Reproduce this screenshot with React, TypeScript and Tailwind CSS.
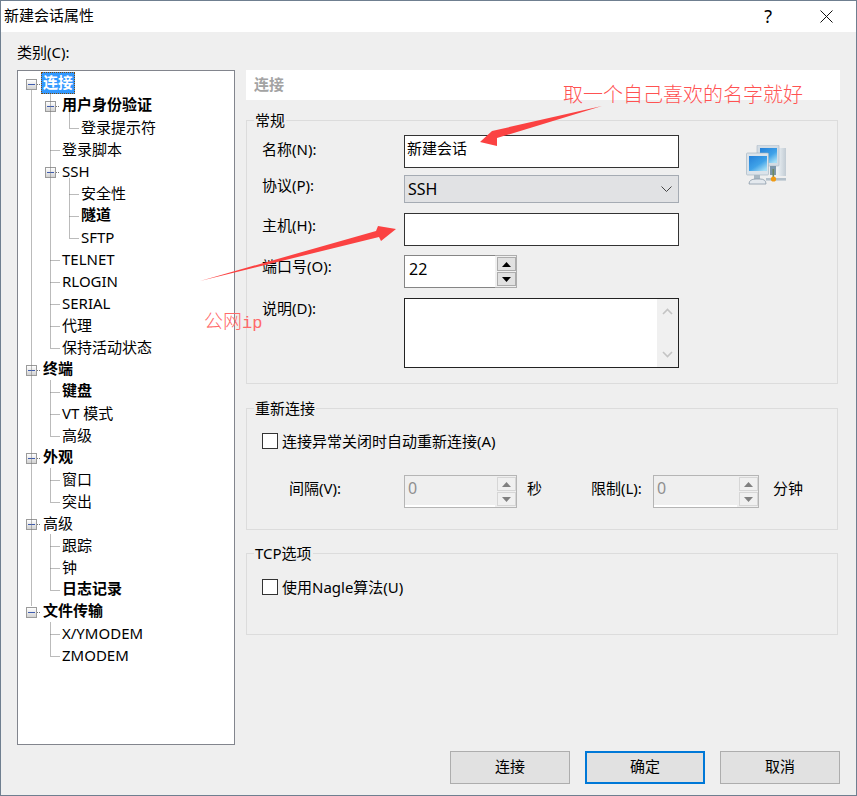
import React from "react";

const font = { fontFamily: '"Noto Sans", "Noto Sans CJK SC", sans-serif' };

type Row = { t: string; lv: 0 | 1 | 2; b?: boolean; box?: boolean; sel?: boolean };
const rows: Row[] = [
  { t: "连接", lv: 0, b: true, box: true, sel: true },
  { t: "用户身份验证", lv: 1, b: true, box: true },
  { t: "登录提示符", lv: 2 },
  { t: "登录脚本", lv: 1 },
  { t: "SSH", lv: 1, box: true },
  { t: "安全性", lv: 2 },
  { t: "隧道", lv: 2, b: true },
  { t: "SFTP", lv: 2 },
  { t: "TELNET", lv: 1 },
  { t: "RLOGIN", lv: 1 },
  { t: "SERIAL", lv: 1 },
  { t: "代理", lv: 1 },
  { t: "保持活动状态", lv: 1 },
  { t: "终端", lv: 0, b: true, box: true },
  { t: "键盘", lv: 1, b: true },
  { t: "VT 模式", lv: 1 },
  { t: "高级", lv: 1 },
  { t: "外观", lv: 0, b: true, box: true },
  { t: "窗口", lv: 1 },
  { t: "突出", lv: 1 },
  { t: "高级", lv: 0, box: true },
  { t: "跟踪", lv: 1 },
  { t: "钟", lv: 1 },
  { t: "日志记录", lv: 1, b: true },
  { t: "文件传输", lv: 0, b: true, box: true },
  { t: "X/YMODEM", lv: 1 },
  { t: "ZMODEM", lv: 1 },
];

const ROW_TOP = 1;
const yOf = (i: number) => ROW_TOP + i * 22 + 12.5;

function TreeLines() {
  const seg: [number, number, number, number][] = [];
  const X0 = 13.5;
  const X1 = 32.5;
  const X2 = 51.5;
  seg.push([X0, yOf(0) + 6, X0, yOf(24) - 6]);
  ([[0, 12], [13, 16], [17, 19], [20, 23], [24, 26]] as const).forEach(([a, b]) =>
    seg.push([X1, yOf(a) + 10, X1, yOf(b)])
  );
  ([[1, 2], [4, 7]] as const).forEach(([a, b]) => seg.push([X2, yOf(a) + 6, X2, yOf(b)]));
  rows.forEach((r, i) => {
    const y = yOf(i);
    if (r.lv === 0) seg.push([19, y, 23, y]);
    else if (r.lv === 1) seg.push(r.box ? [38, y, 42, y] : [X1, y, 42, y]);
    else seg.push([X2, y, 61, y]);
  });
  return (
    <svg className="absolute left-0 top-0 pointer-events-none" width="216" height="673">
      {seg.map((s, i) => (
        <line key={i} x1={s[0]} y1={s[1]} x2={s[2]} y2={s[3]} stroke="#777" strokeDasharray="1 1" />
      ))}
    </svg>
  );
}

function Box() {
  return (
    <span className="mt-[2px] mr-[6px] flex h-[11px] w-[11px] shrink-0 items-center justify-center border border-[#9b9b9b] bg-linear-to-b from-white to-[#d2d2d2]">
      <span className="h-px w-[7px] bg-[#3f5cae]" />
    </span>
  );
}

function TreeRow({ r }: { r: Row }) {
  const pad = r.lv === 0 ? "pl-[8px]" : r.lv === 2 ? "pl-[63px]" : r.box ? "pl-[27px]" : "pl-[44px]";
  return (
    <div className={`flex h-[22px] items-center ${pad}`}>
      {r.box && <Box />}
      <span
        className={`whitespace-nowrap text-[15px] ${r.b ? "font-bold" : "font-normal"} ${
          r.sel
            ? "-ml-[2px] h-[22px] border border-dotted border-[#7a4a10] bg-[#3399ff] px-[1px] leading-[18px] text-white"
            : r.b
              ? "pb-[2px] leading-[22px] text-black"
              : "leading-[22px] text-black"
        }`}
      >
        {r.t}
      </span>
    </div>
  );
}

function Tri({ up, color }: { up?: boolean; color: string }) {
  return (
    <svg width="9" height="5" viewBox="0 0 9 5">
      <polygon points={up ? "4.5,0 9,5 0,5" : "0,0 9,0 4.5,5"} fill={color} />
    </svg>
  );
}

function Spin({ value, disabled, w }: { value: string; disabled?: boolean; w: string }) {
  return (
    <div
      className={`flex h-[33px] ${w} shrink-0 border ${
        disabled ? "border-[#b5b5b5] bg-[#efefef]" : "border-[#adadad] bg-[#f0f0f0]"
      }`}
    >
      <div
        className={`flex flex-1 items-center pb-[6px] text-[16px] ${
          disabled
            ? "border-b-2 border-white pl-[3px] text-[#8f8f8f]"
            : "-my-px -ml-px border border-r-0 border-[#858585] bg-white pl-[4px] text-black"
        }`}
      >
        {value}
      </div>
      <div className="flex w-[21px] shrink-0 flex-col items-center justify-center gap-px pl-px">
        {[true, false].map((up) => (
          <div
            key={String(up)}
            className={`flex h-[14px] w-[19px] items-center justify-center border ${
              disabled ? "border-[#d6d6d6] bg-[#f0f0f0]" : "border-[#acacac] bg-[#e1e1e1]"
            }`}
          >
            <Tri up={up} color={disabled ? "#808080" : "#000"} />
          </div>
        ))}
      </div>
    </div>
  );
}

function Group({ title, h, className, children }: { title: string; h: string; className?: string; children?: React.ReactNode }) {
  return (
    <div className={`relative w-[592px] border border-[#dcdcdc] ${h} ${className ?? ""}`}>
      <span className="absolute -top-[11px] left-[7px] bg-[#efefef] px-px text-[15px] leading-[20px] text-black">{title}</span>
      {children}
    </div>
  );
}

function Check({ label, className }: { label: string; className?: string }) {
  return (
    <div className={`flex items-center ${className ?? ""}`}>
      <span className="h-[16px] w-[16px] shrink-0 border border-[#333] bg-white" />
      <span className="ml-[4px] text-[15px] leading-[20px] text-black">{label}</span>
    </div>
  );
}

function NetworkIcon() {
  return (
    <svg width="42" height="42" viewBox="0 0 42 42" className="shrink-0 blur-[0.4px]">
      <defs>
        <linearGradient id="scr" x1="0" y1="0" x2="0.8" y2="1">
          <stop offset="0" stopColor="#2580d8" />
          <stop offset="0.6" stopColor="#3fa2e8" />
          <stop offset="1" stopColor="#a6def5" />
        </linearGradient>
        <linearGradient id="tower" x1="0" y1="0" x2="1" y2="0">
          <stop offset="0" stopColor="#eef3f7" />
          <stop offset="1" stopColor="#c2ccd4" />
        </linearGradient>
      </defs>
      <rect x="31" y="3" width="9" height="28" fill="url(#tower)" />
      <rect x="11" y="0" width="22" height="21" rx="1" fill="#d3dce4" stroke="#a8b6c2" strokeWidth="0.6" />
      <rect x="14" y="3" width="17" height="15" fill="url(#scr)" />
      <rect x="24" y="21" width="6" height="9" fill="#7c97ab" />
      <rect x="0.5" y="8" width="22" height="22" rx="1" fill="#dbe3ea" stroke="#9fb0bd" strokeWidth="0.6" />
      <rect x="3" y="11" width="18" height="15" fill="url(#scr)" />
      <rect x="8" y="30" width="6" height="5" fill="#a9b8c3" />
      <path d="M3 39 Q3 34 10 34 L14 34 Q20 34 20 39 Z" fill="#e4e9ee" stroke="#8a9aa8" strokeWidth="0.8" />
      <rect x="20" y="33" width="20" height="2.6" fill="#b4c0ca" />
      <rect x="26.5" y="24" width="1.6" height="9" fill="#6f8a5c" />
      <circle cx="27.5" cy="34" r="2.6" fill="#f09a12" />
    </svg>
  );
}

function Btn({ label, primary, className }: { label: string; primary?: boolean; className?: string }) {
  return (
    <button
      className={`flex h-[33px] w-[120px] items-center justify-center bg-[#e1e1e1] pb-[2px] text-[15px] text-black ${
        primary ? "border-2 border-[#0078d7]" : "border border-[#adadad]"
      } ${className ?? ""}`}
    >
      {label}
    </button>
  );
}

export default function App() {
  return (
    <div style={font} className="relative h-[796px] w-[857px] overflow-hidden border border-[#6f7f90] bg-[#efefef] text-black">
      {/* title bar */}
      <div className="flex h-[31px] items-center justify-between bg-white pl-[3px]">
        <span className="pb-[2px] text-[15px]">新建会话属性</span>
        <div className="flex items-center">
          <span className="mr-[48px] pb-[2px] text-[18px] leading-none">?</span>
          <svg width="13" height="13" viewBox="0 0 13 13" className="mr-[23px]">
            <path d="M0.5 0.5 L12.5 12.5 M12.5 0.5 L0.5 12.5" stroke="#111" strokeWidth="1" />
          </svg>
        </div>
      </div>

      {/* body */}
      <div className="flex pl-[16px]">
        <div className="w-[218px] shrink-0">
          <div className="flex h-[38px] items-end pb-[8px] text-[15px] leading-[20px]">类别(C):</div>
          <div className="relative h-[675px] border border-[#82858d] bg-white pt-px">
            {rows.map((r, i) => (
              <TreeRow key={i} r={r} />
            ))}
            <TreeLines />
          </div>
        </div>

        <div className="ml-[11px] w-[594px] pt-[38px]">
          <div className="flex h-[30px] items-center bg-white pb-[2px] pl-[8px] text-[15px] font-bold text-[#a3a3a3]">连接</div>

          <Group title="常规" h="h-[264px]" className="mt-[20px]">
            <div className="flex pl-[15px] pt-[14px]">
              <div className="w-[142px] pt-[4px] text-[15px] leading-[20px]">名称(N):</div>
              <div className="flex h-[33px] w-[275px] items-center border border-[#333] bg-white pb-[6px] pl-[2px] text-[15px]">新建会话</div>
              <div className="ml-[67px] mt-[10px]">
                <NetworkIcon />
              </div>
            </div>
            <div className="-mt-[12px] flex pl-[15px]">
              <div className="w-[142px] text-[15px] leading-[20px]">协议(P):</div>
              <div className="flex h-[28px] w-[275px] items-center justify-between border border-[#a5abb3] bg-[#e1e2e4] pl-[3px] pr-[6px] text-[16px]">
                SSH
                <svg width="11" height="6" viewBox="0 0 11 6">
                  <path d="M0.5 0.5 L5.5 5.5 L10.5 0.5" fill="none" stroke="#444" strokeWidth="1" />
                </svg>
              </div>
            </div>
            <div className="mt-[10px] flex pl-[15px]">
              <div className="w-[142px] pt-[2px] text-[15px] leading-[20px]">主机(H):</div>
              <div className="h-[33px] w-[275px] border border-[#333] bg-white" />
            </div>
            <div className="mt-[9px] flex pl-[15px]">
              <div className="w-[142px] pt-[1px] text-[15px] leading-[20px]">端口号(O):</div>
              <Spin value="22" w="w-[113px]" />
            </div>
            <div className="mt-[10px] flex pl-[15px]">
              <div className="w-[142px] text-[15px] leading-[20px]">说明(D):</div>
              <div className="flex h-[70px] w-[275px] justify-end border border-[#222] bg-white">
                <div className="flex w-[21px] flex-col items-center justify-between bg-[#f0f0f0] py-[9px]">
                  <svg width="11" height="7" viewBox="0 0 11 7">
                    <path d="M1 6 L5.5 1.5 L10 6" fill="none" stroke="#c4c4c4" strokeWidth="1.6" />
                  </svg>
                  <svg width="11" height="7" viewBox="0 0 11 7">
                    <path d="M1 1 L5.5 5.5 L10 1" fill="none" stroke="#c4c4c4" strokeWidth="1.6" />
                  </svg>
                </div>
              </div>
            </div>
          </Group>

          <Group title="重新连接" h="h-[122px]" className="mt-[24px]">
            <Check label="连接异常关闭时自动重新连接(A)" className="ml-[15px] mt-[22px]" />
            <div className="mt-[24px] flex items-center pl-[42px] text-[15px]">
              <span className="w-[115px] pb-[7px]">间隔(V):</span>
              <Spin value="0" disabled w="w-[113px]" />
              <span className="ml-[10px] w-[64px] pb-[7px]">秒</span>
              <span className="w-[62px] pb-[7px]">限制(L):</span>
              <Spin value="0" disabled w="w-[106px]" />
              <span className="ml-[14px] pb-[7px]">分钟</span>
            </div>
          </Group>

          <Group title="TCP选项" h="h-[82px]" className="mt-[23px]">
            <Check label="使用Nagle算法(U)" className="ml-[15px] mt-[23px]" />
          </Group>
        </div>
      </div>

      {/* buttons */}
      <div className="mt-[6px] flex justify-end gap-[15px] pr-[16px]">
        <Btn label="连接" />
        <Btn label="确定" primary />
        <Btn label="取消" />
      </div>

      {/* annotations */}
      <svg className="absolute -left-px -top-px pointer-events-none" width="857" height="796">
        <polygon points="602,106 492,131 480,142 497,146 497,138" fill="#fb4242" />
        <polygon points="200,281 376,231 378,226 396,229 381,241 379,237" fill="#fb4242" />
      </svg>
      <span className="absolute left-[562px] top-[79px] whitespace-nowrap text-[20px] font-light leading-[30px] text-[#ff5252]">取一个自己喜欢的名字就好</span>
      <span className="absolute left-[203px] top-[307px] whitespace-nowrap text-[19px] font-light leading-[26px] text-[#ff6a6a]">
        公网<span className="text-[17px]" style={{ fontFamily: '"Liberation Mono", monospace' }}>ip</span>
      </span>
    </div>
  );
}
